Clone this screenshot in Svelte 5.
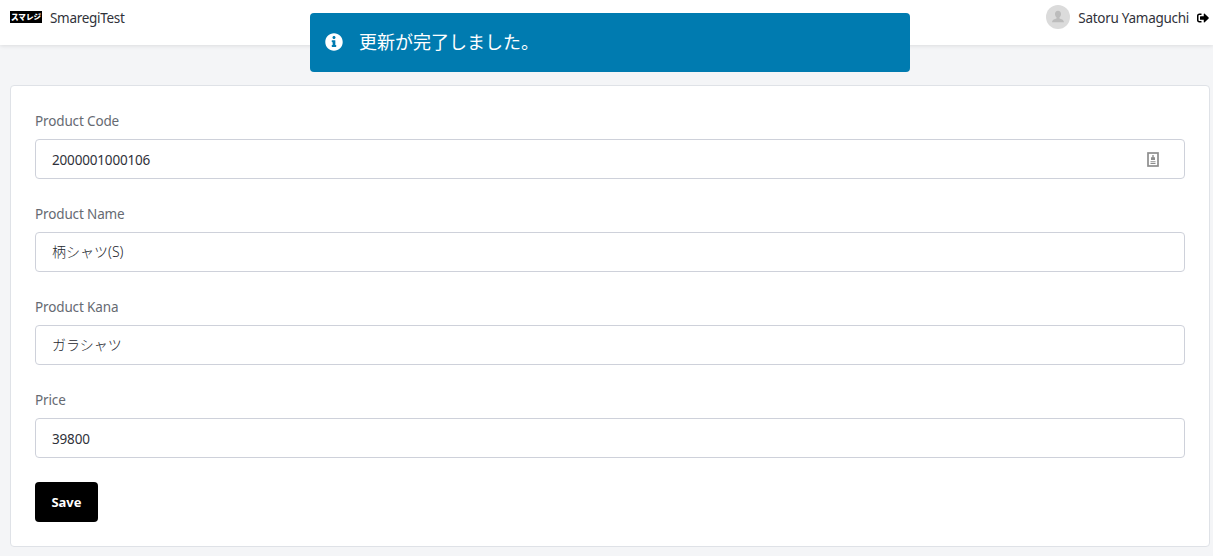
<script lang="ts">
  interface Field {
    id: string;
    label: string;
    value: string;
    autofill?: boolean;
    kana?: boolean;
  }

  let fields: Field[] = $state([
    { id: "code", label: "Product Code", value: "2000001000106", autofill: true },
    { id: "name", label: "Product Name", value: "柄シャツ(S)", kana: true },
    { id: "kana", label: "Product Kana", value: "ガラシャツ", kana: true },
    { id: "price", label: "Price", value: "39800" },
  ]);

  function save(event: SubmitEvent): void {
    event.preventDefault();
  }
</script>

<header class="header">
  <div class="brand">
    <span class="logo">スマレジ</span>
    <span class="app-name">SmaregiTest</span>
  </div>
  <div class="user">
    <svg class="avatar" viewBox="0 0 24 24" aria-hidden="true">
      <circle cx="12" cy="12" r="12" fill="#dbdbdb" />
      <path
        fill="#bcbcbc"
        d="M12 5.800c-1.900 0-3 1.300-3 3.200 0 1.500.6 2.600 1.500 3.300v1.100c-1.600.7-4.300 1-4.500 3.900h12c-.2-2.900-2.900-3.200-4.500-3.900v-1.100c.9-.7 1.500-1.800 1.500-3.300 0-1.900-1.100-3.200-3-3.200z"
      />
    </svg>
    <span class="user-name">Satoru Yamaguchi</span>
    <svg class="logout" viewBox="0 0 512 512" aria-hidden="true">
      <path
        d="M497 273L329 441c-15 15-41 4.500-41-17v-96H152c-13.300 0-24-10.700-24-24v-96c0-13.300 10.700-24 24-24h136V88c0-21.400 25.900-32 41-17l168 168c9.300 9.400 9.300 24.600 0 34zM192 436v-40c0-6.600-5.400-12-12-12H96c-17.700 0-32-14.300-32-32V160c0-17.700 14.300-32 32-32h84c6.600 0 12-5.400 12-12V76c0-6.600-5.400-12-12-12H96c-53 0-96 43-96 96v192c0 53 43 96 96 96h84c6.600 0 12-5.400 12-12z"
      />
    </svg>
  </div>
</header>

<div class="toast" role="status">
  <svg class="toast-icon" viewBox="0 0 512 512" aria-hidden="true">
    <path
      fill="#fff"
      d="M256 8C119 8 8 119 8 256s111 248 248 248 248-111 248-248S393 8 256 8zm0 78c25 0 44 19 44 43s-19 43-44 43-44-19-44-43 19-43 44-43zm64 298c0 7-5 12-12 12H204c-7 0-12-5-12-12v-30c0-7 5-12 12-12h14v-82h-14c-7 0-12-5-12-12v-30c0-7 5-12 12-12h78c7 0 12 5 12 12v124h14c7 0 12 5 12 12z"
    />
  </svg>
  <span class="toast-text">更新が完了しました。</span>
</div>

<main class="main">
  <form class="panel" onsubmit={save}>
    {#each fields as field (field.id)}
      <div class="field">
        <label for={field.id}>{field.label}</label>
        <div class="control">
          <input
            id={field.id}
            class:kana={field.kana}
            type="text"
            autocomplete="off"
            bind:value={field.value}
          />
          {#if field.autofill}
            <svg class="autofill" viewBox="0 0 12 15" aria-hidden="true">
              <rect x="1" y="1" width="10" height="13" fill="#fff" stroke="#8e8e8e" stroke-width="1.700" />
              <path fill="#8e8e8e" d="M5.300 3h1.400v2.200H8V8H4V5.200h1.300zM3.500 9.300h5v1h-5zM3.500 11h5v1h-5z" />
            </svg>
          {/if}
        </div>
      </div>
    {/each}
    <button class="save-btn" type="submit">Save</button>
  </form>
</main>

<style>
  :global(body) {
    background: #f4f5f7;
    color: #30323a;
    font-family: "Noto Sans", "Noto Sans CJK JP", sans-serif;
    font-size: 14px;
    line-height: 21px;
    overflow: hidden;
  }

  .header {
    display: flex;
    align-items: flex-start;
    justify-content: space-between;
    box-sizing: border-box;
    height: 45px;
    padding: 5px 4px 0 10px;
    background: #fff;
    box-shadow: 0 1px 4px rgba(0, 0, 0, 0.1);
  }

  .brand,
  .user {
    display: flex;
    align-items: center;
    height: 24px;
  }

  .brand {
    gap: 8px;
  }

  .logo {
    width: 32px;
    height: 12px;
    background: #000;
    color: #fff;
    font-family: "Noto Sans CJK JP", sans-serif;
    font-size: 7.6px;
    font-weight: 900;
    line-height: 12px;
    text-align: center;
    white-space: nowrap;
  }

  .app-name,
  .user-name {
    padding-top: 2px;
    font-size: 13.5px;
  }

  .app-name {
    letter-spacing: -0.3px;
  }

  .user-name {
    letter-spacing: -0.28px;
  }

  .avatar {
    width: 24px;
    height: 24px;
    margin-right: 8px;
  }

  .logout {
    width: 12px;
    height: 12px;
    margin-top: 2px;
    margin-left: 8px;
  }

  .toast {
    position: absolute;
    top: 13px;
    left: 310px;
    display: flex;
    align-items: center;
    gap: 16px;
    box-sizing: border-box;
    width: 600px;
    height: 59px;
    padding: 0 16px 2px 15px;
    border-radius: 4px;
    background: #007bb0;
    color: #fff;
  }

  .toast-icon {
    width: 18px;
    height: 18px;
  }

  .toast-text {
    font-family: "Noto Sans CJK JP", sans-serif;
    font-size: 18px;
  }

  .main {
    padding: 40px 3px 9px 10px;
  }

  .panel {
    padding: 24px;
    border: 1px solid #dfe2e7;
    border-radius: 4px;
    background: #fff;
  }

  .field {
    margin-bottom: 24px;
  }

  label {
    display: block;
    height: 20px;
    padding-top: 1px;
    margin-bottom: 8px;
    color: #666a72;
    font-size: 13.5px;
    letter-spacing: -0.14px;
  }

  .control {
    display: flex;
    align-items: center;
    box-sizing: border-box;
    height: 40px;
    padding: 0 25px 0 16px;
    border: 1px solid #ced1da;
    border-radius: 4px;
    background: #fff;
  }

  input {
    flex: 1;
    box-sizing: border-box;
    min-width: 0;
    height: 38px;
    padding: 2px 0 0;
    border: none;
    outline: none;
    background: transparent;
    color: #30323a;
    font-family: inherit;
    font-size: 13.5px;
    letter-spacing: -0.17px;
  }

  .kana {
    padding: 0 0 2px;
    color: #24262d;
    font-size: 14px;
    font-weight: 300;
    letter-spacing: 0;
  }

  .autofill {
    width: 12px;
    height: 15px;
  }

  .save-btn {
    display: block;
    width: 63px;
    height: 40px;
    padding: 0;
    border: none;
    border-radius: 4px;
    background: #000;
    color: #fff;
    font-family: inherit;
    font-size: 13px;
    font-weight: 700;
    cursor: pointer;
  }
</style>
